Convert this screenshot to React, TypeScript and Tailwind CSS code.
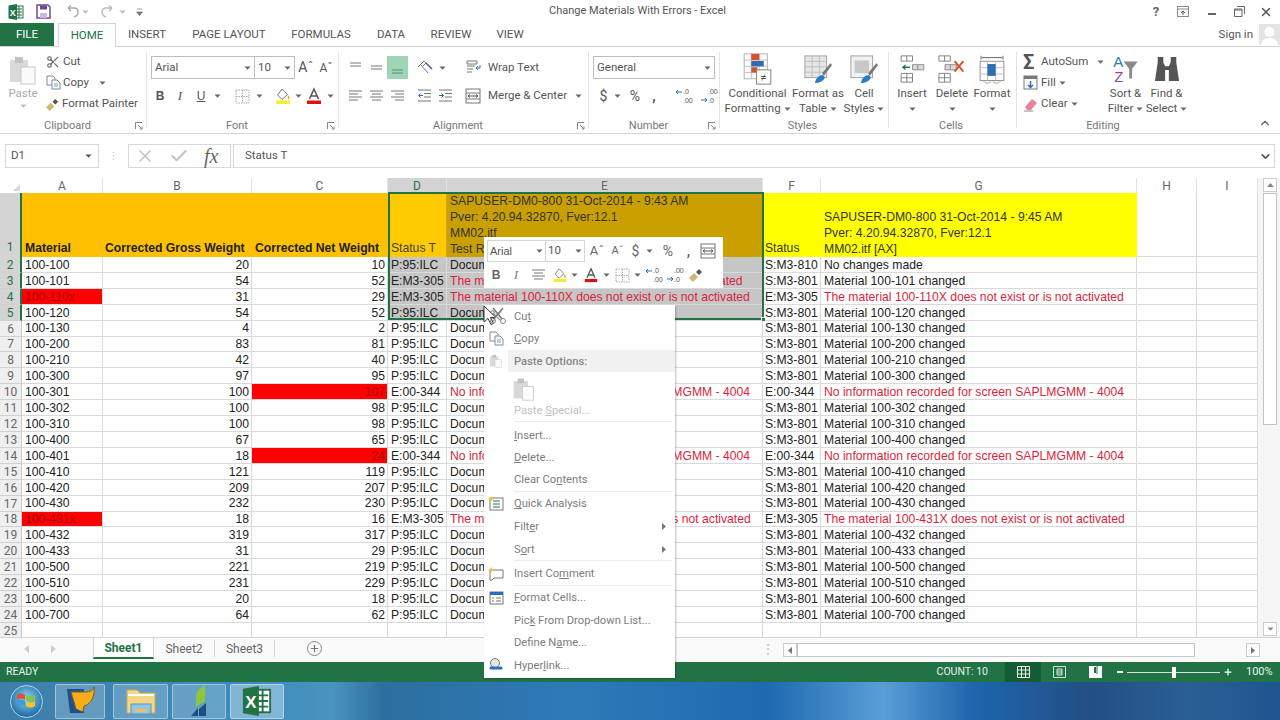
import React from "react";
import { Scissors, X, Check, ChevronDown, ChevronUp, Plus } from "lucide-react";

const UI = "font-['Roboto','Noto_Sans',sans-serif]";
const Caret = ({ c = "#666" }: { c?: string }) => (
  <svg width="7" height="4" viewBox="0 0 7 4" className="shrink-0"><path d="M0.5 0.5h6L3.5 3.8z" fill={c} /></svg>
);
const XlLogo = ({ s = 16 }: { s?: number }) => (
  <svg width={s} height={s} viewBox="0 0 16 16">
    <rect x="6" y="2" width="9" height="12" fill="#fff" stroke="#217346" />
    <path d="M8 5h6M8 8h6M8 11h6M11 2v12" stroke="#217346" strokeWidth="1" />
    <path d="M0.5 1.5L9 0v16l-8.500-1.500z" fill="#217346" />
    <text x="4.700" y="11.500" fontSize="9" fontWeight="700" fill="#fff" textAnchor="middle" fontFamily="Liberation Sans">X</text>
  </svg>
);
const Launcher = () => (
  <svg width="8" height="8" viewBox="0 0 8 8" className="shrink-0"><path d="M0.500 7V.5H7M3 3l4 4M7 4.500V7H4.500" fill="none" stroke="#888" /></svg>
);
const Lines = ({ kind, c = "#777" }: { kind: string; c?: string }) => {
  const l: Record<string, string> = {
    top: "M2 2h11M2 5h11",
    mid: "M2 5h11M2 8h11",
    bot: "M2 9h11M2 12h11",
    left: "M1 2h13M1 5h9M1 8h13M1 11h9",
    center: "M1 2h13M3 5h9M1 8h13M3 11h9",
    right: "M1 2h13M5 5h9M1 8h13M5 11h9",
  };
  return <svg width="15" height="14" viewBox="0 0 15 14"><path d={l[kind]} stroke={c} fill="none" /></svg>;
};
const Indent = ({ flip }: { flip?: boolean }) => (
  <svg width="15" height="14" viewBox="0 0 15 14">
    <path d="M1 1h13M7 4.500h7M7 8h7M1 12h13" stroke="#777" fill="none" />
    <path d={flip ? "M1 6.500h4M3.500 4.500l2 2-2 2" : "M6 6.500H2M3.500 4.500l-2 2 2 2"} stroke={flip ? "#217346" : "#2a6fb5"} fill="none" />
  </svg>
);
const FontColor = ({ s = 18 }: { s?: number }) => (
  <svg width={s} height={s} viewBox="0 0 18 18">
    <path d="M4.500 12L9 2l4.500 10M6 9h6" fill="none" stroke="#555" strokeWidth="1.500" />
    <rect x="2" y="13.500" width="14" height="3.500" fill="#e01010" />
  </svg>
);
const FillColor = ({ s = 18 }: { s?: number }) => (
  <svg width={s} height={s} viewBox="0 0 18 18">
    <path d="M8 2l5.500 5.500L8 12.500 3.500 8z" fill="#fff" stroke="#777" />
    <path d="M14 8c1.500 2 2 3 1 4s-2-1-1-4z" fill="#e8a33c" />
    <rect x="2" y="13.500" width="14" height="3.500" fill="#f6f030" />
  </svg>
);
const Borders = () => (
  <svg width="15" height="15" viewBox="0 0 15 15"><path d="M1 1h13v13H1zM7.500 1v13M1 7.500h13" stroke="#aaa" strokeDasharray="1.500 1" fill="none" /></svg>
);
const Brush = ({ s = 16 }: { s?: number }) => (
  <svg width={s} height={s} viewBox="0 0 16 16">
    <path d="M1 11l5-5 4 4-5 5z" fill="#d9b46c" />
    <path d="M8 5l3-3 3 3-3 3z" fill="#555" />
  </svg>
);
const Dec = ({ flip }: { flip?: boolean }) => (
  <svg width="20" height="18" viewBox="0 0 20 18">
    <text x="9" y="7" fontSize="7" fill="#555" fontFamily="Liberation Sans">{flip ? ".00" : ".0"}</text>
    <text x="9" y="16" fontSize="7" fill="#555" fontFamily="Liberation Sans">{flip ? ".0" : ".00"}</text>
    <path d={flip ? "M2 13h6M6 11l2 2-2 2" : "M8 5H2M4 3L2 5l2 2"} fill="none" stroke="#2a6fb5" />
  </svg>
);
const Merge = () => (
  <svg width="16" height="16" viewBox="0 0 16 16">
    <rect x="1" y="1" width="14" height="14" fill="#fff" stroke="#777" />
    <path d="M1 5h14M1 11h14" stroke="#777" />
    <path d="M3 8h10M3 8l2-1.500M3 8l2 1.500M13 8l-2-1.500M13 8l-2 1.500" stroke="#555" fill="none" />
  </svg>
);
const PasteIcon = ({ s = 30 }: { s?: number }) => (
  <svg width={s} height={s} viewBox="0 0 30 30">
    <rect x="2" y="5" width="18" height="22" rx="1" fill="#d9d9d9" />
    <rect x="7" y="2" width="8" height="6" fill="#c2c2c2" />
    <rect x="13" y="12" width="14" height="17" fill="#fbfbfb" stroke="#c8c8c8" />
  </svg>
);
const CopyIcon = () => (
  <svg width="15" height="15" viewBox="0 0 15 15">
    <path d="M1 1h6l2 2v7H1z" fill="#fff" stroke="#888" />
    <path d="M6 5h5l3 3v6H6z" fill="#fff" stroke="#6f8fb5" />
    <path d="M8 9h4M8 11h4" stroke="#999" />
  </svg>
);

const Big = ({ icon, a, b }: { icon: React.ReactNode; a: string; b: React.ReactNode }) => (
  <div className="flex flex-col items-center">
    <div className="h-[34px] flex items-center justify-center">{icon}</div>
    <div className="text-[11.500px] leading-[15px] whitespace-nowrap text-center">{a}</div>
    <div className="text-[11.500px] leading-[15px] whitespace-nowrap flex items-center gap-[3px] h-[15px]">{b}<Caret /></div>
  </div>
);

const Group = ({ cls, label, launch, children }: { cls: string; label: string; launch?: boolean; children: React.ReactNode }) => (
  <div className={`${cls} shrink-0 flex flex-col h-[81px] mt-[5px]`}>
    <div className="h-[67px] flex">{children}</div>
    <div className="h-[14px] flex items-center pr-[3px]">
      <div className="flex-1 text-center text-[11px] text-[#777]">{label}</div>
      {launch && <Launcher />}
    </div>
  </div>
);
const Sep = () => <div className="w-px h-[76px] mt-[5px] bg-[#e3e3e3] shrink-0" />;

const CondIcon = () => (
  <svg width="29" height="32" viewBox="0 0 32 36">
    <rect x="1" y="1" width="26" height="28" fill="#fff" stroke="#aaa" />
    <path d="M1 8h26M1 15h26M1 22h26M9 1v28M18 1v28" stroke="#bbb" />
    <rect x="9" y="1" width="9" height="7" fill="#d9512c" />
    <rect x="9" y="9" width="14" height="6" fill="#2a6fb5" />
    <rect x="9" y="16" width="7" height="6" fill="#d9512c" />
    <rect x="15" y="19" width="16" height="16" fill="#fff" stroke="#777" />
    <text x="23" y="32" textAnchor="middle" fontSize="12" fill="#444" fontFamily="Liberation Sans">≠</text>
  </svg>
);
const TableIcon = ({ cell }: { cell?: boolean }) => (
  <svg width="29" height="31" viewBox="0 0 32 34">
    <rect x="1" y="2" width="24" height="24" fill={cell ? "#eef2f2" : "#e6e6e6"} stroke="#9a9a9a" />
    {cell ? <rect x="5" y="7" width="16" height="14" fill="#c8c8c8" /> : <path d="M1 8h24M1 14h24M1 20h24M9 2v24M17 2v24" stroke="#bdbdbd" />}
    <path d="M20 21L29 10l2 2-9 12z" fill="#777" />
    <path d="M12 32c1-6 5-9 9-9l2 3c-2 4-6 6-11 6z" fill="#2a7cc0" />
  </svg>
);
const InsertIcon = () => (
  <svg width="25" height="28" viewBox="0 0 28 32">
    <path d="M1 1h13v6H1zM7.500 1v6M1 21h13v10H1zM7.500 21v10M1 26h13" fill="#fff" stroke="#777" />
    <path d="M14 11h13v6H14zM20 11v6" fill="#d8d8d8" stroke="#888" />
    <path d="M11 14H3M6 11.500L3 14l3 2.500" stroke="#217346" strokeWidth="1.500" fill="none" />
  </svg>
);
const DeleteIcon = () => (
  <svg width="28" height="28" viewBox="0 0 32 32">
    <path d="M1 1h13v6H1zM7.500 1v6M1 21h13v10H1zM7.500 21v10M1 26h13" fill="#fff" stroke="#777" />
    <path d="M8 11h13v6H8zM14 11v6" fill="#d8d8d8" stroke="#888" />
    <path d="M19 7l10 12M29 7L19 19" stroke="#d9512c" strokeWidth="2.200" />
  </svg>
);
const FormatIcon = () => (
  <svg width="26" height="31" viewBox="0 0 28 34">
    <path d="M2 2v4M26 2v4M3 4h22" stroke="#555" fill="none" />
    <rect x="1" y="8" width="26" height="21" fill="#fff" stroke="#888" />
    <path d="M1 15h26M1 22h26M9 8v21M18 8v21" stroke="#bbb" />
    <rect x="9" y="11" width="9" height="13" fill="#2a6fb5" />
    <path d="M5 29c0 4 8 4 8 0M15 29c0 4 8 4 8 0" fill="none" stroke="#999" />
  </svg>
);
const SortIcon = () => (
  <svg width="27" height="30" viewBox="0 0 28 32">
    <text x="1" y="14" fontSize="16" fill="#2a7cc0" fontFamily="Liberation Sans">A</text>
    <text x="2" y="30" fontSize="16" fill="#8c4bb0" fontFamily="Liberation Sans">Z</text>
    <path d="M12 8h15l-6 8v10h-3V16z" fill="#8a8a8a" />
  </svg>
);
const FindIcon = () => (
  <svg width="26" height="28" viewBox="0 0 28 30">
    <path d="M4 2h6v6l2 4h4l2-4V2h6v6l3 20H16V16h-4v12H1L4 8z" fill="#555" />
  </svg>
);

type R = [number, string, string, string, string, string, string, string];
const doc = "Document";
const ok = "P:95:ILC";
const s801 = "S:M3-801";
const nf = "No information recorded for screen SAPLMGMM - 4004";
const rows: R[] = [
  [2, "100-100", "20", "10", ok, doc, "S:M3-810", "No changes made"],
  [3, "100-101", "54", "52", "E:M3-305", "The material 100-101 does not exist or is not activated", s801, "Material 100-101 changed"],
  [4, "100-110x", "31", "29", "E:M3-305", "The material 100-110X does not exist or is not activated", "E:M3-305", "The material 100-110X does not exist or is not activated"],
  [5, "100-120", "54", "52", ok, doc, s801, "Material 100-120 changed"],
  [6, "100-130", "4", "2", ok, doc, s801, "Material 100-130 changed"],
  [7, "100-200", "83", "81", ok, doc, s801, "Material 100-200 changed"],
  [8, "100-210", "42", "40", ok, doc, s801, "Material 100-210 changed"],
  [9, "100-300", "97", "95", ok, doc, s801, "Material 100-300 changed"],
  [10, "100-301", "100", "107", "E:00-344", nf, "E:00-344", nf],
  [11, "100-302", "100", "98", ok, doc, s801, "Material 100-302 changed"],
  [12, "100-310", "100", "98", ok, doc, s801, "Material 100-310 changed"],
  [13, "100-400", "67", "65", ok, doc, s801, "Material 100-400 changed"],
  [14, "100-401", "18", "24", "E:00-344", nf, "E:00-344", nf],
  [15, "100-410", "121", "119", ok, doc, s801, "Material 100-410 changed"],
  [16, "100-420", "209", "207", ok, doc, s801, "Material 100-420 changed"],
  [17, "100-430", "232", "230", ok, doc, s801, "Material 100-430 changed"],
  [18, "100-431x", "18", "16", "E:M3-305", "The material 100-431X does not exist or is not activated", "E:M3-305", "The material 100-431X does not exist or is not activated"],
  [19, "100-432", "319", "317", ok, doc, s801, "Material 100-432 changed"],
  [20, "100-433", "31", "29", ok, doc, s801, "Material 100-433 changed"],
  [21, "100-500", "221", "219", ok, doc, s801, "Material 100-500 changed"],
  [22, "100-510", "231", "229", ok, doc, s801, "Material 100-510 changed"],
  [23, "100-600", "20", "18", ok, doc, s801, "Material 100-600 changed"],
  [24, "100-700", "64", "62", ok, doc, s801, "Material 100-700 changed"],
];

const base = "border-r border-b border-[#dadada] px-[2px] pt-px whitespace-nowrap flex items-center overflow-visible text-[#222]";
const ColH = ({ t, sel, green }: { t: string; sel?: boolean; green?: boolean }) => (
  <div className={`flex items-center justify-center text-[12px] border-r border-[#e2e2e2] ${sel ? "bg-[#d4d4d4]" : "bg-white"} ${green ? "text-[#217346]" : "text-[#666]"} ${UI}`}>{t}</div>
);
const RowH = ({ n, sel, cls }: { n: number; sel?: boolean; cls?: string }) => (
  <div className={`flex items-center justify-center pt-px text-[12px] border-b border-[#d0d0d0] ${sel ? "bg-[#d4d4d4] text-[#217346] border-r-2 border-r-[#217346]" : "bg-[#efefef] text-[#666] border-r border-r-[#ccc]"} ${UI} ${cls ?? ""}`}>{n}</div>
);

const Sheet = () => (
  <div className="relative flex-1 h-full overflow-hidden">
    <div className="grid grid-cols-[22px_81px_149px_136px_59px_316px_58px_316px_60px_61px] grid-rows-[15px_64px] auto-rows-[15.92px] font-['Liberation_Sans',sans-serif] text-[12.160px]">
      <div className="bg-white flex items-end justify-end p-[2px]">
        <svg width="7" height="7" viewBox="0 0 7 7"><path d="M7 0v7H0z" fill="#d8d8d8" /></svg>
      </div>
      <ColH t="A" /><ColH t="B" /><ColH t="C" /><ColH t="D" sel green /><ColH t="E" sel /><ColH t="F" /><ColH t="G" /><ColH t="H" /><ColH t="I" />

      <div className={`flex items-end justify-center text-[12px] bg-[#d4d4d4] text-[#217346] border-r-2 border-r-[#217346] pb-[1px] ${UI}`}>1</div>
      <div className="bg-[#ffc000] px-[3px] flex items-end font-bold text-[#222] whitespace-nowrap">Material</div>
      <div className="bg-[#ffc000] pl-[2px] flex items-end font-bold text-[#222] whitespace-nowrap">Corrected Gross Weight</div>
      <div className="bg-[#ffc000] pl-[3px] flex items-end font-bold text-[#222] whitespace-nowrap">Corrected Net Weight</div>
      <div className="bg-[#ffca00] px-[3px] flex items-end text-[#444] whitespace-nowrap border-r border-[#d5a800]">Status T</div>
      <div className="bg-[#c9a000] px-[3px] flex flex-col justify-end leading-[16px] text-[#333] whitespace-nowrap">
        <div>SAPUSER-DM0-800 31-Oct-2014 - 9:43 AM</div>
        <div>Pver: 4.20.94.32870, Fver:12.1</div>
        <div>MM02.itf</div>
        <div>Test Result</div>
      </div>
      <div className="bg-[#ffff00] px-[2px] flex items-end text-[#333] whitespace-nowrap">Status</div>
      <div className="bg-[#ffff00] px-[3px] flex flex-col justify-end leading-[16px] text-[#333] whitespace-nowrap">
        <div>SAPUSER-DM0-800 31-Oct-2014 - 9:45 AM</div>
        <div>Pver: 4.20.94.32870, Fver:12.1</div>
        <div>MM02.itf [AX]</div>
      </div>
      <div className="border-r border-b border-[#dadada]" />
      <div className="border-r border-b border-[#dadada]" />

      {rows.map((r) => {
        const sel = r[0] <= 5;
        const isErr = (t: string) => t.startsWith("The ") || t.startsWith("No inf");
        const redA = r[1].endsWith("x");
        const redC = r[3] === "107" || r[3] === "24";
        return (
          <React.Fragment key={r[0]}>
            <RowH n={r[0]} sel={sel} />
            <div className={`${base} pl-[3px] ${redA ? "bg-[#ff0000] !text-[#a80000]" : ""}`}>{r[1]}</div>
            <div className={`${base} justify-end`}>{r[2]}</div>
            <div className={`${base} justify-end ${redC ? "bg-[#ff0000] !text-[#a80000]" : ""}`}>{r[3]}</div>
            <div className={`${base} !pl-[3px] ${sel ? "bg-[#c6c6c6]" : ""}`}>{r[4]}</div>
            <div className={`${base} !pl-[3px] ${sel ? "bg-[#c6c6c6]" : ""} ${isErr(r[5]) ? "!text-[#dc1f3c]" : ""}`}>{r[5]}</div>
            <div className={`${base}`}>{r[6]}</div>
            <div className={`${base} !pl-[3px] ${isErr(r[7]) ? "!text-[#dc1f3c]" : ""}`}>{r[7]}</div>
            <div className={base} />
            <div className={base} />
          </React.Fragment>
        );
      })}
      <RowH n={25} />
      <div className={base} /><div className={base} /><div className={base} /><div className={base} /><div className={base} /><div className={base} /><div className={base} /><div className={base} /><div className={base} />
    </div>
    <div className="absolute left-[388px] top-[14px] w-[376px] h-[128px] border-2 border-[#217346]" />
    <div className="absolute left-[761px] top-[139px] w-[5px] h-[5px] bg-[#217346] border border-white" />
  </div>
);

const M = ({ icon, children, arrow, cls }: { icon?: React.ReactNode; children: React.ReactNode; arrow?: boolean; cls: string }) => (
  <div className={`flex items-center ${cls}`}>
    <div className="w-[24px] mr-[6px] shrink-0 flex justify-center">{icon}</div>
    <div className="text-[11.200px] pt-[2px] text-[#7d7d7d] whitespace-nowrap">{children}</div>
    {arrow && <svg width="4" height="7" viewBox="0 0 4 7" className="ml-auto mr-[9px]"><path d="M0 0l4 3.500L0 7z" fill="#777" /></svg>}
  </div>
);
const MSep = () => <div className="h-px bg-[#ececec] ml-[30px] mr-[3px]" />;

const Menu = () => (
  <div className={`absolute left-[484px] top-[305px] w-[191px] h-[373px] bg-white shadow-[1px_1px_2px_rgba(0,0,0,0.25)] ${UI}`}>
    <M cls="h-[22px]" icon={<Scissors size={14} color="#888" />}>Cu<u>t</u></M>
    <M cls="h-[23px]" icon={<CopyIcon />}><u>C</u>opy</M>
    <div className="flex items-center h-[22px]">
      <div className="w-[24px] flex justify-center"><PasteIcon s={14} /></div>
      <div className="flex-1 h-full bg-[#f1f1f1] flex items-center pl-[6px] pt-[2px] text-[11.200px] font-medium text-[#888]">Paste Options:</div>
    </div>
    <div className="h-[33px] pl-[28px] flex items-center"><PasteIcon s={24} /></div>
    <M cls="h-[11px]"><span className="text-[#c2c2c2]">Paste <u>S</u>pecial...</span></M>
    <div className="h-[5px]" />
    <MSep />
    <M cls="h-[22px] mt-[2px]"><u>I</u>nsert...</M>
    <M cls="h-[22px]"><u>D</u>elete...</M>
    <M cls="h-[23px]">Clear Co<u>n</u>tents</M>
    <MSep />
    <M cls="h-[23px]" icon={<svg width="16" height="15" viewBox="0 0 16 15"><rect x="2" y="2" width="13" height="12" fill="#fff" stroke="#777" /><path d="M5 5h7M5 8h7M5 11h7" stroke="#217346" /><path d="M3 0l1 2 2 1-2 1-1 2-1-2-2-1 2-1z" fill="#f2c037" /></svg>}><u>Q</u>uick Analysis</M>
    <M cls="h-[23px]" arrow>Filt<u>e</u>r</M>
    <M cls="h-[22px]" arrow>S<u>o</u>rt</M>
    <MSep />
    <M cls="h-[23px] mt-[1px]" icon={<svg width="16" height="14" viewBox="0 0 16 14"><path d="M2 3h13v8H6l-2 2H2z" fill="#fff" stroke="#777" /><path d="M3 0l1 2 2 1-2 1-1 2-1-2-2-1 2-1z" fill="#f2c037" /></svg>}>Insert Co<u>m</u>ment</M>
    <MSep />
    <M cls="h-[23px]" icon={<svg width="15" height="14" viewBox="0 0 15 14"><rect x="1" y="1" width="13" height="12" fill="#fff" stroke="#777" /><rect x="1" y="1" width="13" height="3" fill="#2a6fb5" /><path d="M3 7h2M3 10h2M7 7h5M7 10h5" stroke="#777" /></svg>}><u>F</u>ormat Cells...</M>
    <M cls="h-[22px]">Pic<u>k</u> From Drop-down List...</M>
    <M cls="h-[23px]">Define N<u>a</u>me...</M>
    <M cls="h-[22px]" icon={<svg width="16" height="15" viewBox="0 0 16 15"><circle cx="7" cy="5" r="4.500" fill="#dfe7ef" stroke="#777" /><path d="M3 10h4M9 10h4" stroke="#2a6fb5" strokeWidth="3" strokeLinecap="round" /></svg>}>Hyper<u>l</u>ink...</M>
  </div>
);

const MiniBtn = ({ cls, children }: { cls: string; children: React.ReactNode }) => (
  <div className={`flex items-center justify-center shrink-0 ${cls}`}>{children}</div>
);
const MiniBar = () => (
  <div className={`absolute left-[484px] top-[237px] w-[239px] h-[51px] bg-white flex flex-col pl-[3px] pt-[3px] ${UI}`}>
    <div className="flex items-center h-[22px]">
      <div className="w-[59px] h-[22px] border border-[#d6d6d6] flex items-center px-[2px] text-[11px] text-[#555]">
        <span className="font-['Liberation_Sans',sans-serif]">Arial</span><span className="ml-auto"><Caret /></span>
      </div>
      <div className="w-[39px] h-[22px] border border-[#d6d6d6] border-l-0 flex items-center px-[2px] text-[11.500px] text-[#555]">
        10<span className="ml-auto"><Caret /></span>
      </div>
      <MiniBtn cls="w-[20px] ml-[2px] text-[13px] text-[#666]">Aˆ</MiniBtn>
      <MiniBtn cls="w-[21px] text-[11px] text-[#666]">Aˇ</MiniBtn>
      <MiniBtn cls="w-[15px] text-[14px] text-[#666]">$</MiniBtn>
      <MiniBtn cls="w-[12px]"><Caret /></MiniBtn>
      <MiniBtn cls="w-[22px] ml-[2px] text-[14px] text-[#666]">%</MiniBtn>
      <MiniBtn cls="w-[17px] ml-[1px] text-[14px] font-bold text-[#666]">,</MiniBtn>
      <MiniBtn cls="w-[22px]"><Merge /></MiniBtn>
    </div>
    <div className="flex items-center h-[24px] mt-[1px]">
      <MiniBtn cls="w-[18px] text-[12px] font-bold text-[#666] font-['Liberation_Sans',sans-serif]">B</MiniBtn>
      <MiniBtn cls="w-[22px] text-[12px] italic text-[#777] font-['Liberation_Serif',serif]">I</MiniBtn>
      <MiniBtn cls="w-[22px]"><Lines kind="center" /></MiniBtn>
      <MiniBtn cls="w-[21px]"><FillColor s={16} /></MiniBtn>
      <MiniBtn cls="w-[9px]"><Caret /></MiniBtn>
      <MiniBtn cls="w-[23px]"><FontColor s={16} /></MiniBtn>
      <MiniBtn cls="w-[9px]"><Caret /></MiniBtn>
      <MiniBtn cls="w-[22px]"><Borders /></MiniBtn>
      <MiniBtn cls="w-[9px]"><Caret /></MiniBtn>
      <MiniBtn cls="w-[20px] ml-[2px]"><Dec /></MiniBtn>
      <MiniBtn cls="w-[21px]"><Dec flip /></MiniBtn>
      <MiniBtn cls="w-[22px]"><Brush /></MiniBtn>
    </div>
  </div>
);

const Cursor = () => (
  <svg width="26" height="24" viewBox="0 0 26 24" className="absolute left-[483px] top-[305px]">
    <path d="M1 1v16l4-3.500 3 6 2.500-1-3-6h5.500z" fill="#fff" stroke="#333" />
    <path d="M10 3l9 11M20 3l-9 11" stroke="#777" strokeWidth="1.500" />
    <circle cx="10" cy="16" r="2.500" fill="none" stroke="#888" />
    <circle cx="20" cy="16" r="2.500" fill="none" stroke="#888" />
  </svg>
);

const TaskBtn = ({ cls, children }: { cls: string; children: React.ReactNode }) => (
  <div className={`h-[35px] rounded-[2px] border border-white/40 bg-white/20 flex items-center justify-center shrink-0 ${cls}`}>{children}</div>
);

export default function App() {
  return (
    <div className={`relative w-[1280px] h-[720px] overflow-hidden bg-white flex flex-col text-[#555] ${UI}`}>
      {/* title bar */}
      <div className="h-[23px] shrink-0 flex items-center">
        <div className="w-[549px] shrink-0 flex items-center pl-[8px]">
          <XlLogo />
          <svg width="15" height="15" viewBox="0 0 15 15" className="ml-[12px]"><path d="M1 1h11l2 2v11H1z" fill="#fff" stroke="#6a4a9c" strokeWidth="1.500" /><rect x="4" y="1.500" width="7" height="4" fill="#6a4a9c" /><rect x="4" y="9" width="7" height="5" fill="#c9b8df" /></svg>
          <svg width="15" height="14" viewBox="0 0 15 14" className="ml-[13px]"><path d="M4 3h6c3 0 4 2 4 4s-1 4-4 5M4 3l3-2.500M4 3l3 3" fill="none" stroke="#aaa" strokeWidth="1.500" /></svg>
          <span className="ml-[3px]"><Caret c="#bbb" /></span>
          <svg width="15" height="14" viewBox="0 0 15 14" className="ml-[12px]"><path d="M11 3H5C2 3 1 5 1 7s1 4 4 5M11 3L8 .5M11 3L8 6" fill="none" stroke="#bbb" strokeWidth="1.500" /></svg>
          <span className="ml-[3px]"><Caret c="#bbb" /></span>
          <svg width="7" height="8" viewBox="0 0 7 8" className="ml-[10px]"><path d="M1 1h5M.5 4h6l-3 3.500z" fill="#777" stroke="#777" strokeWidth=".7" /></svg>
        </div>
        <div className="text-[11px] text-[#555] whitespace-nowrap">Change Materials With Errors - Excel</div>
        <div className="ml-auto flex items-center pr-[7px] text-[#666]">
          <span className="text-[13px] font-bold w-[20px] text-center">?</span>
          <svg width="12" height="11" viewBox="0 0 12 11" className="ml-[11px]"><rect x=".5" y=".5" width="11" height="10" fill="#fff" stroke="#888" /><path d="M.5 3h11" stroke="#888" /><path d="M6 9V5M4 7l2-2 2 2" stroke="#555" fill="none" /></svg>
          <span className="ml-[19px] w-[8px] h-[2px] bg-[#666] mt-[4px]" />
          <svg width="11" height="11" viewBox="0 0 11 11" className="ml-[18px]"><path d="M3 .5h7.500V8M.5 3h7.500v7.500H.5z" fill="#fff" stroke="#666" /><path d="M.5 4h7.500" stroke="#666" /></svg>
          <X size={14} strokeWidth={2.500} className="ml-[14px] text-[#555]" />
        </div>
      </div>
      {/* tabs */}
      <div className="h-[23px] shrink-0 flex items-stretch text-[11.500px] relative">
        <div className="w-[54px] bg-[#217346] text-white flex items-center justify-center">FILE</div>
        <div className="w-[58px] ml-[4px] bg-white border border-b-0 border-[#d4d4d4] text-[#217346] flex items-center justify-center relative -mb-px z-10">HOME</div>
        <div className="flex items-center w-[62px] justify-center">INSERT</div>
        <div className="flex items-center w-[102px] justify-center">PAGE LAYOUT</div>
        <div className="flex items-center w-[82px] justify-center">FORMULAS</div>
        <div className="flex items-center w-[58px] justify-center">DATA</div>
        <div className="flex items-center w-[62px] justify-center">REVIEW</div>
        <div className="flex items-center w-[56px] justify-center">VIEW</div>
        <div className="ml-auto flex items-center">
          <span>Sign in</span>
          <div className="ml-[6px] w-[21px] h-[21px] bg-[#e4e4e4] overflow-hidden flex justify-center">
            <svg width="21" height="21" viewBox="0 0 21 21"><circle cx="10.500" cy="8" r="5" fill="#fff" /><path d="M2 21c1-6 5-7 8.500-7s7.500 1 8.500 7z" fill="#fff" /></svg>
          </div>
        </div>
      </div>
      {/* ribbon */}
      <div className="h-[88px] shrink-0 flex border-y border-[#d4d4d4] text-[#555] relative">
        <Group cls="w-[146px]" label="Clipboard" launch>
          <div className="w-[46px] flex flex-col items-center pt-[3px] text-[#aaa]">
            <PasteIcon />
            <div className="text-[11.500px] mt-[1px] leading-[14px]">Paste</div>
            <div className="mt-[4px]"><Caret c="#bbb" /></div>
          </div>
          <div className="flex flex-col text-[11.500px] -mt-[1px]">
            <div className="h-[21px] flex items-center gap-[3px]"><Scissors size={14} color="#666" /><span>Cut</span></div>
            <div className="h-[21px] flex items-center gap-[2px]"><CopyIcon /><span>Copy</span><span className="ml-[8px]"><Caret /></span></div>
            <div className="h-[22px] flex items-center gap-[2px] -ml-[1px]"><Brush s={15} /><span className="whitespace-nowrap">Format Painter</span></div>
          </div>
        </Group>
        <Sep />
        <Group cls="w-[191px]" label="Font" launch>
          <div className="flex flex-col pt-[4px] pl-[4px]">
            <div className="flex items-center h-[23px]">
              <div className="w-[104px] h-[23px] border border-[#bdbdbd] flex items-center px-[3px] text-[11.500px]"><span>Arial</span><span className="ml-auto"><Caret /></span></div>
              <div className="w-[40px] h-[23px] border border-l-0 border-[#bdbdbd] flex items-center px-[3px] text-[11.500px]"><span>10</span><span className="ml-auto"><Caret /></span></div>
              <span className="ml-[1px] w-[20px] text-[14px] text-center">Aˆ</span>
              <span className="w-[20px] text-[12px] text-center">Aˇ</span>
            </div>
            <div className="flex items-center h-[24px] mt-[5px]">
              <span className="w-[18px] text-center text-[12px] font-bold font-['Liberation_Sans',sans-serif]">B</span>
              <span className="w-[22px] text-center text-[13px] italic font-['Liberation_Serif',serif]">I</span>
              <span className="w-[20px] text-center text-[12px] underline font-['Liberation_Sans',sans-serif]">U</span>
              <span className="ml-[3px]"><Caret /></span>
              <span className="w-[28px] flex justify-center ml-[7px]"><Borders /></span>
              <Caret />
              <span className="w-[24px] flex justify-center ml-[8px]"><FillColor /></span>
              <Caret />
              <span className="w-[24px] flex justify-center"><FontColor /></span>
              <span className="ml-[1px]"><Caret /></span>
            </div>
          </div>
        </Group>
        <Sep />
        <Group cls="w-[249px]" label="Alignment" launch>
          <div className="flex flex-col pt-[4px] pl-[6px]">
            <div className="flex items-center h-[23px]">
              <span className="w-[21px] flex justify-center"><Lines kind="top" /></span>
              <span className="w-[21px] flex justify-center"><Lines kind="mid" /></span>
              <span className="w-[21px] h-[23px] bg-[#9fd5b7] flex justify-center items-center"><Lines kind="bot" c="#5d8a70" /></span>
              <span className="w-[27px] ml-[4px] flex justify-center text-[14px] text-[#666]">
                <svg width="18" height="16" viewBox="0 0 18 16"><path d="M3 4l8 9M1 7l6-6 5 5M6 6l3-3" fill="none" stroke="#777" /><path d="M9 3l6 6" stroke="#6a4a9c" strokeWidth="1.500" /></svg>
              </span>
              <Caret />
              <span className="w-[17px] ml-[19px] flex justify-center"><svg width="15" height="15" viewBox="0 0 15 15"><path d="M1 1h10v3H1zM1 6h8M1 9h6M1 12h5" stroke="#777" fill="none" /><path d="M14 5v3h-4M12 6l-2 2 2 2" stroke="#2a6fb5" fill="none" /></svg></span>
              <span className="ml-[6px] text-[11.500px] whitespace-nowrap">Wrap Text</span>
            </div>
            <div className="flex items-center h-[24px] mt-[5px]">
              <span className="w-[21px] flex justify-center"><Lines kind="left" /></span>
              <span className="w-[21px] flex justify-center"><Lines kind="center" /></span>
              <span className="w-[21px] flex justify-center"><Lines kind="right" /></span>
              <span className="w-[21px] ml-[6px] flex justify-center"><Indent /></span>
              <span className="w-[21px] flex justify-center"><Indent flip /></span>
              <span className="w-[17px] ml-[8px] flex justify-center"><Merge /></span>
              <span className="ml-[7px] text-[11.500px] whitespace-nowrap">Merge &amp; Center</span>
              <span className="ml-[8px]"><Caret /></span>
            </div>
          </div>
        </Group>
        <Sep />
        <Group cls="w-[130px]" label="Number" launch>
          <div className="flex flex-col pt-[4px] pl-[4px]">
            <div className="w-[122px] h-[23px] border border-[#bdbdbd] flex items-center px-[3px] text-[11.500px]"><span>General</span><span className="ml-auto"><Caret /></span></div>
            <div className="flex items-center h-[24px] mt-[5px] text-[14px]">
              <span className="w-[21px] text-center">$</span>
              <Caret />
              <span className="w-[22px] ml-[3px] text-center">%</span>
              <span className="w-[16px] text-center font-bold">,</span>
              <span className="w-[20px] ml-[12px] flex justify-center"><Dec /></span>
              <span className="w-[20px] ml-[5px] flex justify-center"><Dec flip /></span>
            </div>
          </div>
        </Group>
        <Sep />
        <Group cls="w-[168px]" label="Styles">
          <div className="flex pl-[8px] gap-[3px]">
            <div className="w-[59px]"><Big icon={<CondIcon />} a="Conditional" b="Formatting" /></div>
            <div className="w-[56px]"><Big icon={<TableIcon />} a="Format as" b="Table" /></div>
            <div className="w-[36px] ml-[-3px]"><Big icon={<TableIcon cell />} a="Cell" b="Styles" /></div>
          </div>
        </Group>
        <Sep />
        <Group cls="w-[127px]" label="Cells">
          <div className="flex pl-[3px]">
            <div className="w-[40px]"><Big icon={<InsertIcon />} a="Insert" b="" /></div>
            <div className="w-[40px]"><Big icon={<DeleteIcon />} a="Delete" b="" /></div>
            <div className="w-[40px]"><Big icon={<FormatIcon />} a="Format" b="" /></div>
          </div>
        </Group>
        <Sep />
        <Group cls="w-[175px]" label="Editing">
          <div className="flex flex-col text-[11.500px] pl-[6px] w-[88px] -mt-[1px]">
            <div className="h-[21px] flex items-center"><span className="w-[18px] text-[20px] leading-none font-bold text-[#555]">Σ</span><span>AutoSum</span><span className="ml-auto mr-[1px]"><Caret /></span></div>
            <div className="h-[21px] flex items-center"><svg width="15" height="15" viewBox="0 0 15 15" className="mr-[3px]"><rect x="1" y="1" width="13" height="13" fill="#fff" stroke="#777" /><rect x="1" y="1" width="13" height="3" fill="#777" /><path d="M7.500 6v6M5 10l2.500 2.500L10 10" stroke="#2a6fb5" fill="none" strokeWidth="1.500" /></svg><span>Fill</span><span className="ml-[3px]"><Caret /></span></div>
            <div className="h-[22px] flex items-center"><svg width="15" height="15" viewBox="0 0 15 15" className="mr-[3px]"><path d="M2 10l7-8 5 4-6 7H4z" fill="#e7849c" /><path d="M1 14h9" stroke="#888" /></svg><span>Clear</span><span className="ml-[3px]"><Caret /></span></div>
          </div>
          <div className="w-[41px]"><Big icon={<SortIcon />} a="Sort &" b="Filter" /></div>
          <div className="w-[41px]"><Big icon={<FindIcon />} a="Find &" b="Select" /></div>
        </Group>
        <div className="ml-auto self-end mb-[3px] mr-[8px] text-[#666]"><ChevronUp size={14} strokeWidth={2} /></div>
      </div>
      {/* formula bar */}
      <div className="h-[44px] shrink-0 flex items-center pl-[5px] pr-[5px]">
        <div className="w-[94px] h-[24px] border border-[#d8d8d8] flex items-center px-[5px] text-[11.500px] text-[#555]"><span>D1</span><span className="ml-auto mr-[1px]"><Caret c="#555" /></span></div>
        <div className="w-[29px] flex justify-center text-[#bbb] text-[11px] leading-none">⋮</div>
        <div className="w-[103px] h-[24px] border border-[#d8d8d8] flex items-center text-[#c4c4c4]">
          <X size={20} strokeWidth={2} className="ml-[6px]" />
          <Check size={20} strokeWidth={2.500} className="ml-[14px]" />
          <span className="ml-[15px] text-[20px] italic text-[#666] font-['Liberation_Serif',serif]">fx</span>
        </div>
        <div className="ml-[2px] flex-1 h-[24px] border border-[#d8d8d8] flex items-center pl-[11px] text-[11.500px] text-[#555]">
          <span>Status T</span>
          <ChevronDown size={13} strokeWidth={3} className="ml-auto mr-[2px] text-[#555]" />
        </div>
      </div>
      {/* sheet */}
      <div className="h-[459px] shrink-0 flex relative">
        <Sheet />
        <div className="w-[22px] shrink-0 flex flex-col pl-[5px] pr-[3px] pt-[0px] pb-[1px] bg-[#f6f6f6]">
          <div className="h-[14px] border border-[#ccc] bg-white flex items-center justify-center"><svg width="7" height="4" viewBox="0 0 7 4"><path d="M0 4h7L3.500 0z" fill="#888" /></svg></div>
          <div className="h-[232px] border border-[#c4c4c4] bg-white mt-[1px]" />
          <div className="flex-1" />
          <div className="h-[14px] border border-[#ccc] bg-white flex items-center justify-center"><Caret c="#888" /></div>
        </div>
      </div>
      {/* sheet tabs */}
      <div className="h-[25px] shrink-0 flex items-start border-t border-[#d4d4d4] text-[12px] bg-[#fafafa]">
        <div className="w-[93px] h-[21px] flex items-center pl-[24px] gap-[22px]">
          <svg width="5" height="8" viewBox="0 0 5 8"><path d="M5 0L0 4l5 4z" fill="#ccc" /></svg>
          <svg width="5" height="8" viewBox="0 0 5 8"><path d="M0 0l5 4-5 4z" fill="#ccc" /></svg>
        </div>
        <div className="w-[61px] bg-white border-x border-[#d4d4d4] border-b-2 border-b-[#217346] font-bold text-[#217346] flex items-center justify-center h-[21px]">Sheet1</div>
        <div className="w-[61px] h-[17px] mt-[2px] flex items-center justify-center text-[#666] border-r border-[#d4d4d4]">Sheet2</div>
        <div className="w-[60px] h-[17px] mt-[2px] flex items-center justify-center text-[#666] border-r border-[#d4d4d4]">Sheet3</div>
        <div className="ml-[32px] h-[21px] flex items-center"><div className="w-[15px] h-[15px] rounded-full border-[1.500px] border-[#888] flex items-center justify-center"><Plus size={11} strokeWidth={2.500} color="#777" /></div></div>
        <div className="ml-[438px] w-[15px] h-[21px] flex items-center justify-center text-[#bbb] leading-none">⋮</div>
        <div className="ml-[8px] mt-[5px] h-[14px] w-[14px] border border-[#ccc] bg-white flex items-center justify-center"><svg width="4" height="7" viewBox="0 0 4 7"><path d="M4 0L0 3.500 4 7z" fill="#777" /></svg></div>
        <div className="mt-[5px] h-[14px] w-[398px] border border-[#c4c4c4] bg-white" />
        <div className="flex-1" />
        <div className="mt-[5px] h-[14px] mr-[20px] w-[14px] border border-[#ccc] bg-white flex items-center justify-center"><svg width="4" height="7" viewBox="0 0 4 7"><path d="M0 0l4 3.500L0 7z" fill="#777" /></svg></div>
      </div>
      {/* status bar */}
      <div className="h-[20px] shrink-0 bg-[#217346] text-white flex items-center text-[10.500px]">
        <span className="pl-[6px] opacity-90">READY</span>
        <span className="ml-auto opacity-90">COUNT: 10</span>
        <div className="ml-[17px] w-[36px] h-[20px] bg-[#155c35] flex items-center justify-center">
          <svg width="13" height="12" viewBox="0 0 13 12"><path d="M.5.5h12v11H.5zM4.500.5v11M8.500.5v11M.5 4h12M.5 8h12" fill="none" stroke="#fff" opacity=".9" /></svg>
        </div>
        <div className="w-[36px] flex justify-center"><svg width="13" height="12" viewBox="0 0 13 12"><path d="M.5.5h12v11H.5zM4 3h5v6H4zM4 5h5M4 7h5" fill="none" stroke="#fff" opacity=".8" /></svg></div>
        <div className="w-[36px] flex justify-center"><svg width="13" height="12" viewBox="0 0 13 12"><rect width="13" height="12" fill="#fff" /><rect x="5" y="1" width="2" height="6" fill="#217346" /><path d="M8 0v8" stroke="#217346" /></svg></div>
        <div className="ml-[4px] w-[6px] h-[2px] bg-white" />
        <div className="ml-[4px] w-[93px] h-px bg-white/80 relative flex items-center"><div className="ml-[45px] w-[4px] h-[11px] bg-white shrink-0" /></div>
        <Plus size={10} strokeWidth={3} className="ml-[3px]" />
        <span className="ml-[13px] mr-[8px] opacity-90 w-[26px] text-right text-[11px]">100%</span>
      </div>
      {/* taskbar */}
      <div className="flex-1 flex items-center bg-[linear-gradient(90deg,#3d7ea8_0%,#3f8fc0_22%,#4a93bd_26%,#2d6f9f_30%,#2d7ab8_45%,#1d6ab0_60%,#5b9ed6_69%,#1e66ad_76%,#224f85_85%,#2a5f95_93%,#1f5590_100%)] gap-[4px]">
        <div className="w-[52px] shrink-0 flex justify-center">
          <div className="w-[33px] h-[33px] rounded-full bg-[radial-gradient(circle_at_50%_40%,#8fd3f0,#1f6ea8_75%)] border border-[#b8d8e8] flex items-center justify-center">
            <svg width="20" height="18" viewBox="0 0 20 18"><path d="M1 3c3-2 5-2 8 0v5C6 6 4 6 1 8z" fill="#e8502e" /><path d="M10 3c3 2 5 2 9 0v5c-4 2-6 2-9 0z" fill="#86c440" /><path d="M1 9c3-2 5-2 8 0v5c-3-2-5-2-8 0z" fill="#3a9be0" /><path d="M10 9c3 2 5 2 9 0v5c-4 2-6 2-9 0z" fill="#f4c430" /></svg>
          </div>
        </div>
        <TaskBtn cls="w-[50px] ml-[-1px]">
          <svg width="32" height="30" viewBox="0 0 32 30"><path d="M3 3h17v24H6z" fill="#1f4f96" /><path d="M7 6h14c5 0 9-2 9-5 1 8-2 17-10 19l-1 6-7-3z" fill="#f3ae1a" stroke="#8a5a10" /></svg>
        </TaskBtn>
        <TaskBtn cls="w-[55px] ml-[4px]">
          <svg width="32" height="30" viewBox="0 0 32 30"><path d="M2 4h10l3 3h15v20H2z" fill="#f3d785" stroke="#c9a85a" /><path d="M3 9h26" stroke="#fff" strokeWidth="2" /><rect x="6" y="18" width="20" height="10" fill="#8ec5e8" stroke="#5c95bd" /><rect x="10" y="23" width="12" height="3" fill="#e8c35c" /></svg>
        </TaskBtn>
        <TaskBtn cls="w-[54px]">
          <svg width="20" height="32" viewBox="0 0 20 32"><path d="M7 12C7 6 12 2 16 0v16c-3 2-7 4-9 6z" fill="#8ec63f" /><path d="M2 31l7-8v8zM10 24l7-6v13h-7z" fill="#1f4f80" /></svg>
        </TaskBtn>
        <TaskBtn cls="w-[54px] bg-white/35"><XlLogo s={30} /></TaskBtn>
      </div>
      <MiniBar />
      <Menu />
      <Cursor />
    </div>
  );
}
